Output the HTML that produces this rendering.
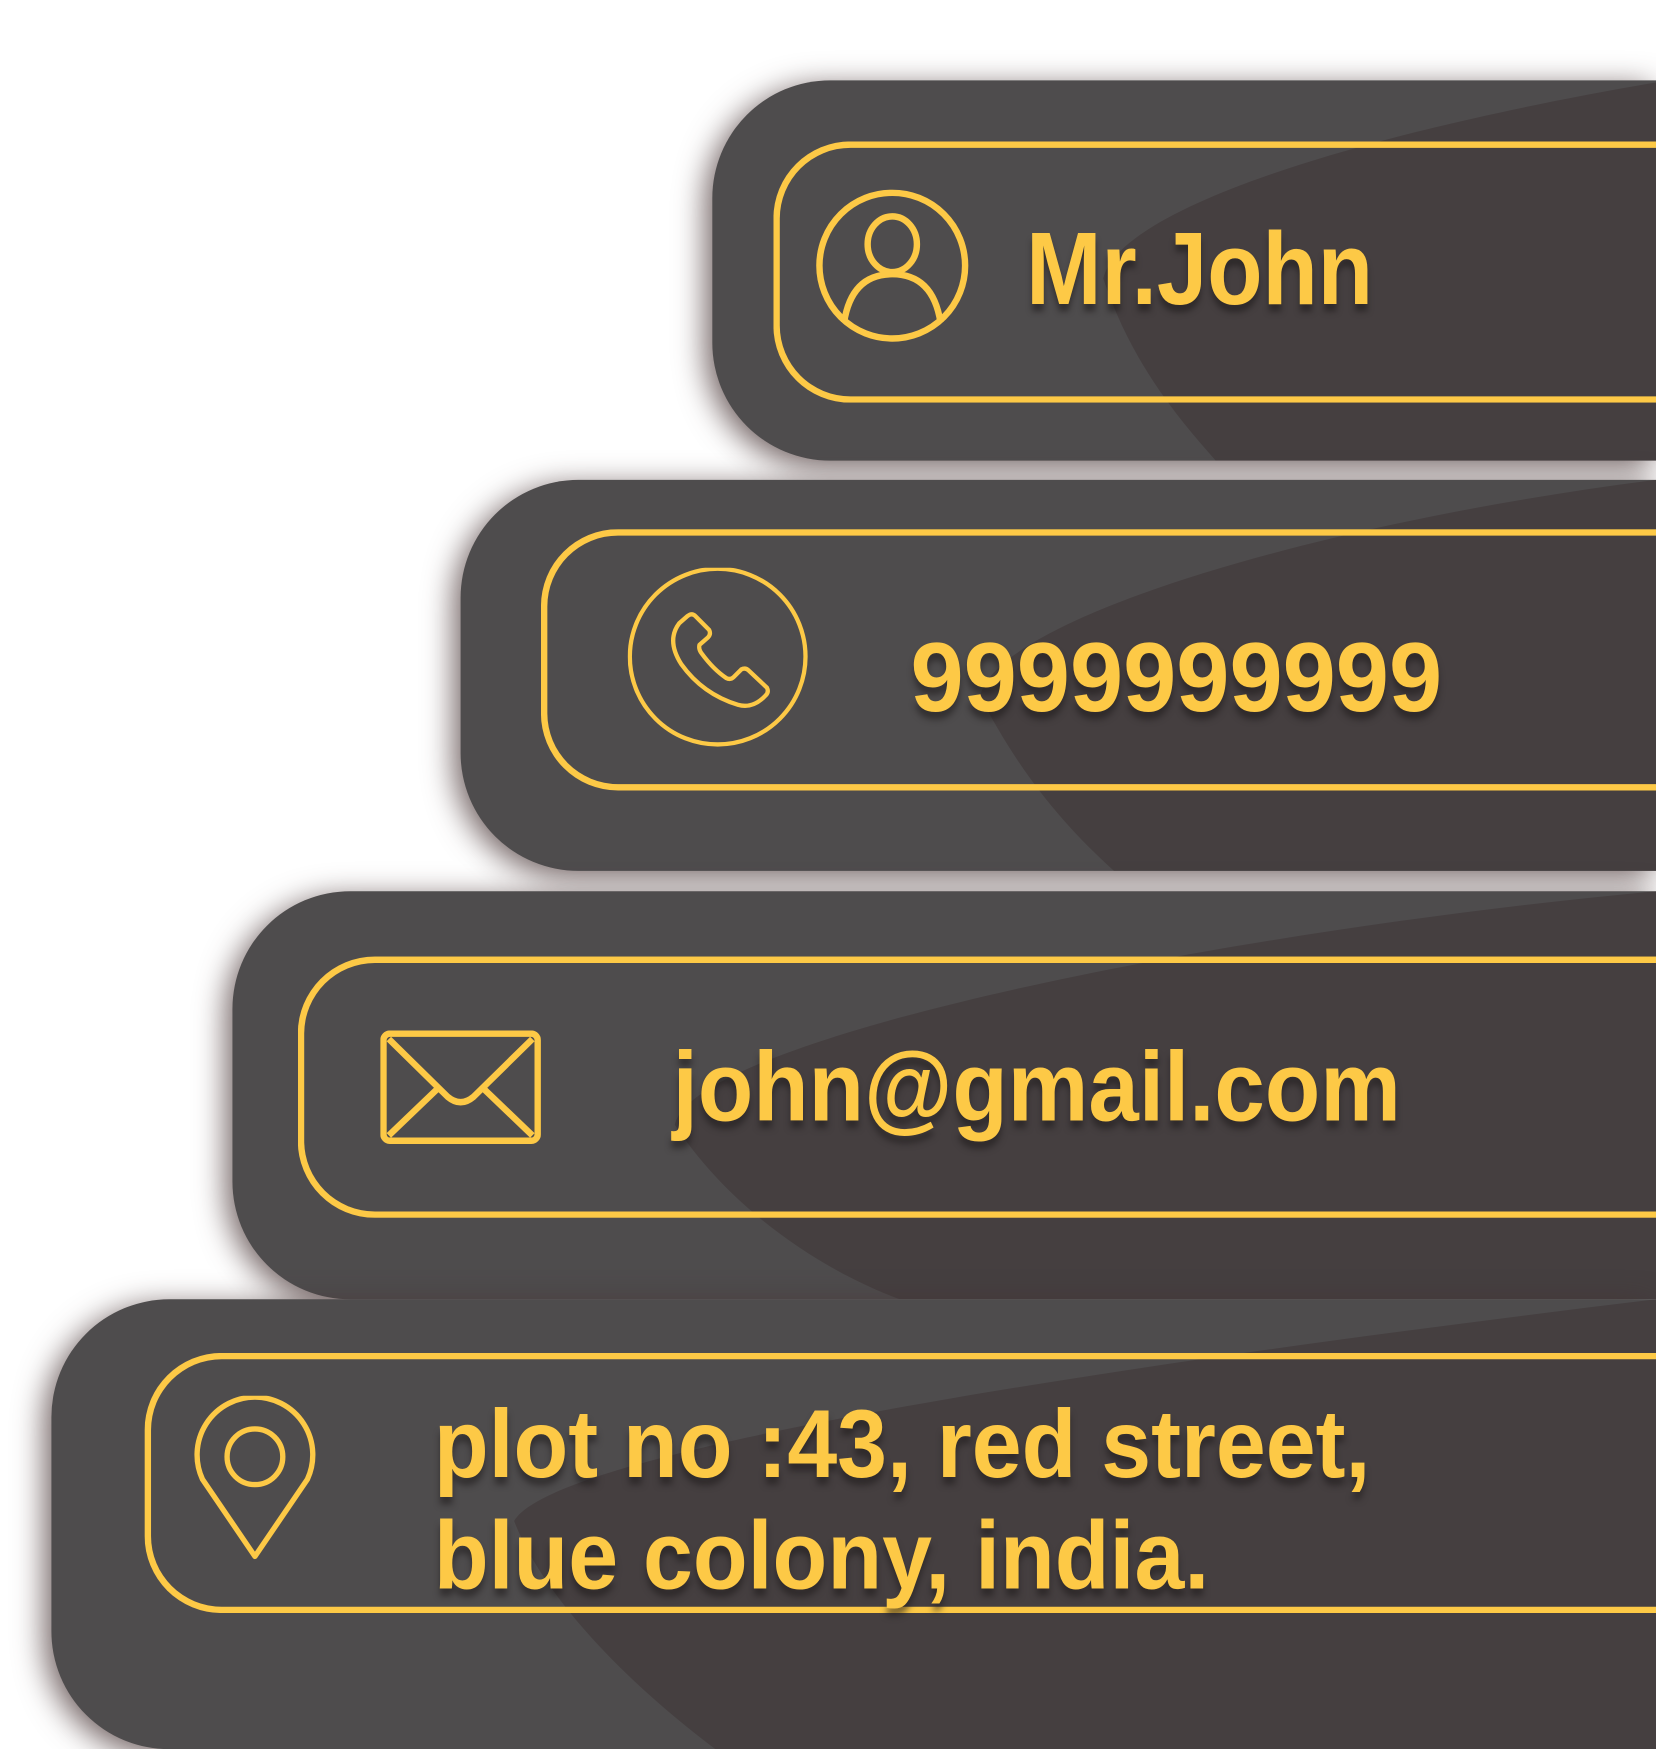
<!DOCTYPE html>
<html><head><meta charset="utf-8"><style>
html,body{margin:0;padding:0;background:#fff;overflow:hidden;width:1656px;height:1680px}
#s{position:absolute;left:0;top:0;width:1546px;height:1568px;transform:scale(1.07115);transform-origin:0 0}
.bar{position:absolute;right:0;background:#4e4c4d;overflow:hidden;border-radius:110px 0 0 110px;box-shadow:-6px 6px 28px rgba(70,50,50,.75)}
.bar svg.bg{position:absolute;left:0;top:0}
.in{position:absolute;border:6px solid #fdc946;border-right:none;border-radius:72px 0 0 72px;box-sizing:border-box}
.t{position:absolute;color:#fdc946;font-family:"Liberation Sans",sans-serif;font-weight:bold;white-space:nowrap;text-shadow:0 7px 6px rgba(30,25,25,.55);transform-origin:0 0}
.ic{position:absolute}
</style></head><body><div id="s">

<div class="bar" style="left:48px;top:1213px;width:1498px;height:420px;z-index:4">
<svg class="bg" width="1498" height="420"><path d="M1498,0 C1000,60 470,140 432,207 C460,280 540,360 620,420 L1498,420 Z" fill="#453f40"/></svg>
<div class="in" style="left:87px;top:50px;width:1411px;height:243px"></div>
<svg class="ic" style="left:125px;top:90px" width="130" height="160" viewBox="0 0 130 160"><path d="M65,150 L16,78 A54,54 0 1 1 114,78 Z" fill="none" stroke="#fdc946" stroke-width="5" stroke-linejoin="round"/><circle cx="65" cy="57" r="26" fill="none" stroke="#fdc946" stroke-width="5"/></svg>
<div class="t" style="left:357px;top:84px;font-size:90px;line-height:104px;transform:scaleX(.93)">plot no :43, red street,<br>blue colony, india.</div>
</div>

<div class="bar" style="left:217px;top:832px;width:1329px;height:381px;z-index:3">
<svg class="bg" width="1329" height="381"><path d="M1329,0 C900,40 430,140 413,218 C460,290 540,350 623,381 L1329,381 Z" fill="#453f40"/></svg>
<div class="in" style="left:61px;top:61px;width:1268px;height:244px"></div>
<svg class="ic" style="left:138px;top:130px" width="150" height="106" viewBox="0 0 150 106"><rect x="3" y="3" width="144" height="100" rx="6" fill="none" stroke="#fdc946" stroke-width="6"/><path d="M8,8 L63,62 Q75,72 87,62 L142,8 M8,98 L55,53 M142,98 L95,53" fill="none" stroke="#fdc946" stroke-width="6" stroke-linejoin="round"/></svg>
<div class="t" style="left:411px;top:128px;font-size:92px;line-height:110px;transform:scaleX(.92)">john@gmail.com</div>
</div>

<div class="bar" style="left:430px;top:448px;width:1116px;height:365px;z-index:2">
<svg class="bg" width="1116" height="365"><path d="M1116,0 C800,40 500,130 485,202 C520,270 560,320 610,365 L1116,365 Z" fill="#453f40"/></svg>
<div class="in" style="left:75px;top:46px;width:1041px;height:244px"></div>
<svg class="ic" style="left:156px;top:82px" width="170" height="170" viewBox="0 0 170 170"><circle cx="84" cy="83" r="82" fill="none" stroke="#fdc946" stroke-width="4"/><path d="M48,52 L56,45 Q60,42 63,45 L76,58 Q78,62 75,65 L67,72 Q66,76 69,80 Q80,95 92,103 Q96,105 99,102 L106,95 Q110,93 113,96 L130,112 Q132,116 129,119 Q117,132 103,128 Q70,118 50,90 Q36,68 48,52 Z" fill="none" stroke="#fdc946" stroke-width="4" stroke-linejoin="round"/></svg>
<div class="t" style="left:420px;top:130px;font-size:92px;line-height:110px;transform:scaleX(.97)">9999999999</div>
</div>

<div class="bar" style="left:665px;top:75px;width:881px;height:355px;z-index:1">
<svg class="bg" width="881" height="355"><path d="M881,2 C600,50 380,120 365,185 C390,260 430,310 470,355 L881,355 Z" fill="#453f40"/></svg>
<div class="in" style="left:57px;top:57px;width:824px;height:244px"></div>
<svg class="ic" style="left:95px;top:102px" width="146" height="144" viewBox="0 0 146 144"><ellipse cx="73" cy="71" rx="68" ry="68" fill="none" stroke="#fdc946" stroke-width="6"/><ellipse cx="73" cy="51" rx="23" ry="26" fill="none" stroke="#fdc946" stroke-width="6"/><path d="M28,124 Q35,79 73,79 Q111,79 118,124" fill="none" stroke="#fdc946" stroke-width="6"/></svg>
<div class="t" style="left:293px;top:122px;font-size:96px;line-height:110px;transform:scaleX(.88)">Mr.John</div>
</div>

</div></body></html>
